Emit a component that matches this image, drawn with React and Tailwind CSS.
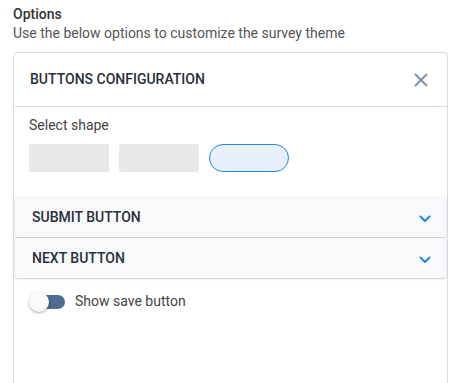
import React, { useState } from 'react';

const Chevron = () => (
  <svg width="12" height="8" viewBox="0 0 12 8" fill="none">
    <path d="M1.5 1.5L6 6L10.5 1.5" stroke="#1e88e5" strokeWidth="2" strokeLinecap="round" strokeLinejoin="round" />
  </svg>
);

const AccordionItem = ({ title }) => (
  <div className="mx-px flex h-10 items-center justify-between rounded-[3px] bg-[#f7f9fb] pl-[17px] pr-[15px] shadow-[0_1px_2px_rgba(0,0,0,0.18),0_0_0_1px_rgba(0,0,0,0.03)]">
    <span className="text-[14px] font-medium uppercase text-[#2a2f3a]">{title}</span>
    <span className="mt-1"><Chevron /></span>
  </div>
);

const App = () => {
  const [shape, setShape] = useState('round');
  const [showSave, setShowSave] = useState(false);

  const shapes = [
    { id: 'square', cls: 'rounded-none' },
    { id: 'rounded', cls: 'rounded-[3px]' },
    { id: 'round', cls: 'rounded-full' },
  ];

  return (
    <div className="h-[383px] w-[473px] overflow-hidden bg-white px-[13px] pt-[5px] font-['Roboto',sans-serif]">
      <div className="text-[14px] font-medium leading-[19px] text-[#333]">Options</div>
      <div className="text-[14px] leading-[19px] text-[#555]">Use the below options to customize the survey theme</div>

      {/* Card */}
      <div className="mt-[9px] h-[400px] w-[435px] rounded-t-[4px] border border-[#d5dde8]">
        <div className="flex h-[54px] items-center justify-between border-b border-[#d5dde8] pl-[16px] pr-[19px]">
          <span className="text-[14px] font-medium uppercase text-[#2a2f3a]">Buttons configuration</span>
          <svg width="14" height="14" viewBox="0 0 14 14">
            <path d="M1 1L13 13M13 1L1 13" stroke="#7b8ea3" strokeWidth="1.8" />
          </svg>
        </div>

        <div className="px-[15px] pt-[9px]">
          <div className="text-[14px] leading-[18px] text-[#444]">Select shape</div>
          <div className="mt-[10px] flex gap-[10px]">
            {shapes.map((s) =>
              shape === s.id ? (
                <button
                  key={s.id}
                  onClick={() => setShape(s.id)}
                  className={`h-[28px] w-[80px] border border-[#1e88e5] bg-[#e8f0fe] ${s.cls}`}
                />
              ) : (
                <button
                  key={s.id}
                  onClick={() => setShape(s.id)}
                  className={`h-[28px] w-[80px] bg-[#e8e8e8] ${s.cls}`}
                />
              )
            )}
          </div>
        </div>

        <div className="mt-[25px] flex flex-col gap-px">
          <AccordionItem title="Submit button" />
          <AccordionItem title="Next button" />
        </div>

        <div className="flex items-center gap-[10px] px-[15px] pt-[13px]">
          <button onClick={() => setShowSave(!showSave)} className="relative h-[20px] w-[36px]">
            <span className="absolute left-[6px] right-0 top-[3px] h-[14px] rounded-full bg-[#4f6b8d]" />
            <span className="absolute left-0 top-0 h-[20px] w-[20px] rounded-full bg-[#fafafa] shadow-[0_1px_3px_rgba(0,0,0,0.35)]" />
          </button>
          <span className="text-[14px] text-[#444]">Show save button</span>
        </div>
      </div>
    </div>
  );
};

export default App;
